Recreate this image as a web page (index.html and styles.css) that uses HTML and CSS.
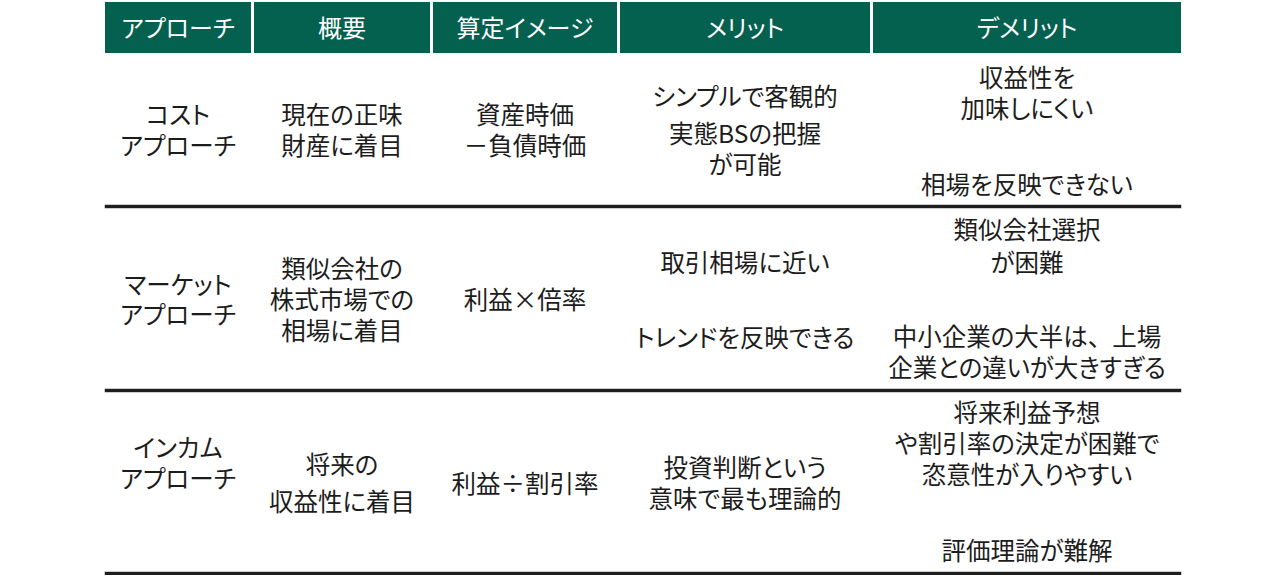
FILE: index.html
```html
<!DOCTYPE html>
<html lang="ja">
<head>
<meta charset="utf-8">
<link rel="stylesheet" href="styles.css">
</head>
<body>
<div class="table">
  <div class="head">
    <div class="hcell">アプローチ</div>
    <div class="hcell">概要</div>
    <div class="hcell">算定イメージ</div>
    <div class="hcell">メリット</div>
    <div class="hcell">デメリット</div>
  </div>

  <div class="row row1">
    <div class="cell"><div class="blk"><p>コスト</p><p>アプローチ</p></div></div>
    <div class="cell"><div class="blk"><p>現在の正味</p><p>財産に着目</p></div></div>
    <div class="cell"><div class="blk"><p>資産時価</p><p>－負債時価</p></div></div>
    <div class="cell stack"><div class="blk"><p>シンプルで客観的</p></div><div class="blk"><p>実態BSの把握</p><p>が可能</p></div></div>
    <div class="cell split"><div class="blk"><p>収益性を</p><p>加味しにくい</p></div><div class="blk"><p>相場を反映できない</p></div></div>
  </div>
  <div class="rule"></div>

  <div class="row row2">
    <div class="cell"><div class="blk lh30"><p>マーケット</p><p>アプローチ</p></div></div>
    <div class="cell"><div class="blk"><p>類似会社の</p><p>株式市場での</p><p>相場に着目</p></div></div>
    <div class="cell"><div class="blk"><p>利益×倍率</p></div></div>
    <div class="cell stack wide"><div class="blk"><p>取引相場に近い</p></div><div class="blk"><p>トレンドを反映できる</p></div></div>
    <div class="cell split"><div class="blk lh33"><p>類似会社選択</p><p>が困難</p></div><div class="blk"><p>中小企業の大半は<span class="full">、</span>上場</p><p>企業との違いが大きすぎる</p></div></div>
  </div>
  <div class="rule"></div>

  <div class="row row3">
    <div class="cell raised"><div class="blk"><p>インカム</p><p>アプローチ</p></div></div>
    <div class="cell"><div class="blk lh37"><p>将来の</p><p>収益性に着目</p></div></div>
    <div class="cell"><div class="blk"><p>利益÷割引率</p></div></div>
    <div class="cell"><div class="blk"><p>投資判断という</p><p>意味で最も理論的</p></div></div>
    <div class="cell split"><div class="blk"><p>将来利益予想</p><p>や割引率の決定が困難で</p><p>恣意性が入りやすい</p></div><div class="blk"><p>評価理論が難解</p></div></div>
  </div>
  <div class="rule"></div>
</div>
</body>
</html>
```

FILE: styles.css
```css
html, body {
  margin: 0;
  padding: 0;
  background: #ffffff;
}

body {
  font-family: "Noto Sans CJK JP", "Noto Sans", sans-serif;
  color: #1c1c1c;
  font-feature-settings: "palt";
}

.table {
  width: 1076px;
  margin: 2px 0 0 105px;
}

.head,
.row {
  display: grid;
  grid-template-columns: 146px 176px 184px 250px 308px;
  column-gap: 3px;
}

.head {
  height: 51px;
}

.hcell {
  background: #04604f;
  color: #ffffff;
  font-size: 24px;
  display: flex;
  align-items: center;
  justify-content: center;
  padding-bottom: 2px;
}

.row1 { height: 152px; }
.row2 { height: 181px; }
.row3 { height: 180px; }

.cell {
  display: flex;
  flex-direction: column;
  align-items: center;
  justify-content: center;
  text-align: center;
  font-size: 24.5px;
  white-space: nowrap;
}

.blk {
  display: flex;
  flex-direction: column;
  align-items: center;
  --lh: 31px;
}

.blk p {
  margin: 0;
  height: var(--lh);
  line-height: var(--lh);
}

.full {
  font-feature-settings: normal;
}

.cell.stack {
  gap: 6px;
}

.cell.stack.wide {
  gap: 44px;
}

.cell.split {
  justify-content: space-between;
  padding: 8px 0 6px;
}

.row2 .cell.split { padding: 4px 0 7px; }
.row3 .cell.split { padding: 4px 0 7px; }

.cell.raised {
  padding-bottom: 40px;
}

.lh30 { --lh: 30px; }
.lh33 { --lh: 33px; }
.lh37 { --lh: 37px; }

.rule {
  height: 3px;
  background: #1e1e1e;
  box-shadow: 0 0 0 0.5px #9a9a9a;
}
```
